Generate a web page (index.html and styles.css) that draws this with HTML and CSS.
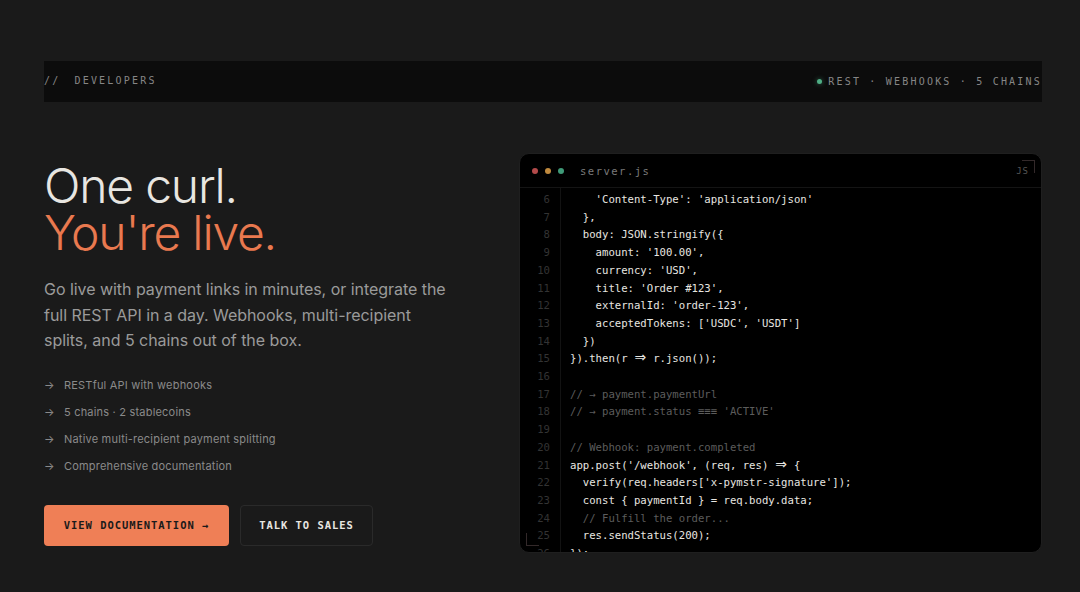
FILE: index.html
```html
<!DOCTYPE html>
<html lang="en">
<head>
    <meta charset="UTF-8">
    <meta name="viewport" content="width=device-width, initial-scale=1.0">
    <title>Developers</title>
    <link rel="stylesheet" href="styles.css">
</head>
<body>
    <!-- Section bar -->
    <div class="section-bar">
        <div class="section-label"><span class="slashes">//</span><span>DEVELOPERS</span></div>
        <div class="section-meta"><span class="status-dot"></span><span>REST · WEBHOOKS · 5 CHAINS</span></div>
    </div>

    <main class="hero">
        <!-- Left column -->
        <section class="intro">
            <h1>One curl.<br><span class="accent">You're live.</span></h1>
            <p class="lead">Go live with payment links in minutes, or integrate the full REST API in a day. Webhooks, multi-recipient splits, and 5 chains out of the box.</p>
            <ul class="features">
                <li><span class="arrow">→</span>RESTful API with webhooks</li>
                <li><span class="arrow">→</span>5 chains · 2 stablecoins</li>
                <li><span class="arrow">→</span>Native multi-recipient payment splitting</li>
                <li><span class="arrow">→</span>Comprehensive documentation</li>
            </ul>
            <div class="actions">
                <a class="btn btn-primary" href="#">VIEW DOCUMENTATION →</a>
                <a class="btn btn-ghost" href="#">TALK TO SALES</a>
            </div>
        </section>

        <!-- Code window -->
        <section class="code-window">
            <div class="code-head">
                <span class="light red"></span>
                <span class="light amber"></span>
                <span class="light green"></span>
                <span class="file-name">server.js</span>
                <span class="lang">JS</span>
            </div>
            <div class="code-body">
                <pre class="gutter">6
7
8
9
10
11
12
13
14
15
16
17
18
19
20
21
22
23
24
25
26</pre>
                <pre class="code">    'Content-Type': 'application/json'
  },
  body: JSON.stringify({
    amount: '100.00',
    currency: 'USD',
    title: 'Order #123',
    externalId: 'order-123',
    acceptedTokens: ['USDC', 'USDT']
  })
}).then(r <span class="lig">⇒</span> r.json());

<span class="comment">// → payment.paymentUrl</span>
<span class="comment">// → payment.status ≡≡≡ 'ACTIVE'</span>

<span class="comment">// Webhook: payment.completed</span>
app.post('/webhook', (req, res) <span class="lig">⇒</span> {
  verify(req.headers['x-pymstr-signature']);
  const { paymentId } = req.body.data;
  <span class="comment">// Fulfill the order...</span>
  res.sendStatus(200);
});</pre>
            </div>
            <span class="corner corner-tr"></span>
            <span class="corner corner-bl"></span>
        </section>
    </main>
</body>
</html>
```

FILE: styles.css
```css
/* General Styles */
html, body {
    height: 100%;
}
body {
    margin: 0;
    padding: 61px 38px 0 44px;
    box-sizing: border-box;
    overflow: hidden;
    background-color: #1a1a1a;
    color: #e8e6e1;
    font-family: Inter, "Noto Sans", sans-serif;
}

/* Section bar */
.section-bar {
    display: flex;
    justify-content: space-between;
    align-items: center;
    height: 41px;
    background-color: #0c0c0c;
    font-family: "DejaVu Sans Mono", monospace;
    font-size: 10px;
    letter-spacing: 2.2px;
    color: #868686;
}
.section-label {
    display: flex;
    gap: 14px;
    margin-top: -2px;
}
.section-meta {
    display: flex;
    align-items: center;
    gap: 6px;
    white-space: nowrap;
}
.status-dot {
    width: 5px;
    height: 5px;
    border-radius: 50%;
    background-color: #4fae85;
    box-shadow: 0 0 5px rgba(79, 174, 133, 0.6);
}

/* Hero layout */
.hero {
    display: grid;
    grid-template-columns: 475px 523px;
    margin-top: 51px;
}
.intro {
    padding-top: 9px;
}
h1 {
    margin: 0;
    font-size: 48px;
    line-height: 47px;
    font-weight: 300;
    letter-spacing: -1.2px;
    color: #e8e6e1;
}
.accent {
    color: #e9794f;
}
.lead {
    width: 410px;
    margin: 21px 0 0;
    font-size: 16px;
    line-height: 25.6px;
    letter-spacing: -0.04px;
    color: #9a9a9a;
}
.features {
    list-style-type: none;
    margin: 18px 0 0;
    padding: 0;
    font-size: 11px;
    letter-spacing: 0.2px;
    color: #8a8a8a;
}
.features li {
    display: flex;
    height: 26.8px;
    align-items: center;
}
.arrow {
    width: 20px;
}
.actions {
    display: flex;
    gap: 11px;
    margin-top: 26px;
}
.btn {
    display: flex;
    align-items: center;
    justify-content: center;
    box-sizing: border-box;
    height: 41px;
    border-radius: 4px;
    font-family: "DejaVu Sans Mono", monospace;
    font-size: 10.5px;
    letter-spacing: 0.95px;
    font-weight: bold;
    text-decoration: none;
}
.btn-primary {
    width: 185px;
    background-color: #ef7f56;
    color: #1a1a1a;
}
.btn-ghost {
    width: 133px;
    border: 1px solid #2a2a2a;
    color: #e8e6e1;
}

/* Code window */
.code-window {
    position: relative;
    height: 400px;
    overflow: hidden;
    box-sizing: border-box;
    background-color: #000;
    border: 1px solid #1f1f1f;
    border-radius: 10px;
}
.code-head {
    display: flex;
    align-items: center;
    gap: 7px;
    height: 33px;
    padding: 0 6px 0 12px;
    border-bottom: 1px solid #141414;
}
.light {
    width: 6px;
    height: 6px;
    border-radius: 50%;
}
.red {
    background-color: #b34a4a;
}
.amber {
    background-color: #c08a3e;
}
.green {
    background-color: #3f9a78;
}
.file-name {
    margin-left: 9px;
    font-family: "DejaVu Sans Mono", monospace;
    font-size: 10.5px;
    letter-spacing: 1.5px;
    color: #7a7a7a;
}
.lang {
    margin-left: auto;
    margin-right: 6px;
    font-family: "DejaVu Sans Mono", monospace;
    font-size: 9px;
    letter-spacing: 1px;
    color: #555;
}
.code-body {
    display: flex;
}
pre {
    margin: 0;
    font-family: "DejaVu Sans Mono", monospace;
    font-size: 10.63px;
    line-height: 17.7px;
}
.gutter {
    width: 30px;
    padding: 3px 10px 0 0;
    text-align: right;
    color: #333;
    border-right: 1px solid #121212;
}
.code {
    padding: 3px 0 0 9px;
    color: #e8e6e1;
}
.comment {
    color: #5c5c5c;
}
.lig {
    display: inline-block;
    width: 12.8px;
    font-family: "DejaVu Sans", sans-serif;
    font-size: 14px;
    line-height: 0;
    text-align: center;
}
.corner {
    position: absolute;
    width: 12px;
    height: 12px;
    border: 0 solid #33292a;
}
.corner-tr {
    top: 6px;
    right: 6px;
    border-top-width: 1px;
    border-right-width: 1px;
}
.corner-bl {
    bottom: 6px;
    left: 6px;
    border-bottom-width: 1px;
    border-left-width: 1px;
}
```
